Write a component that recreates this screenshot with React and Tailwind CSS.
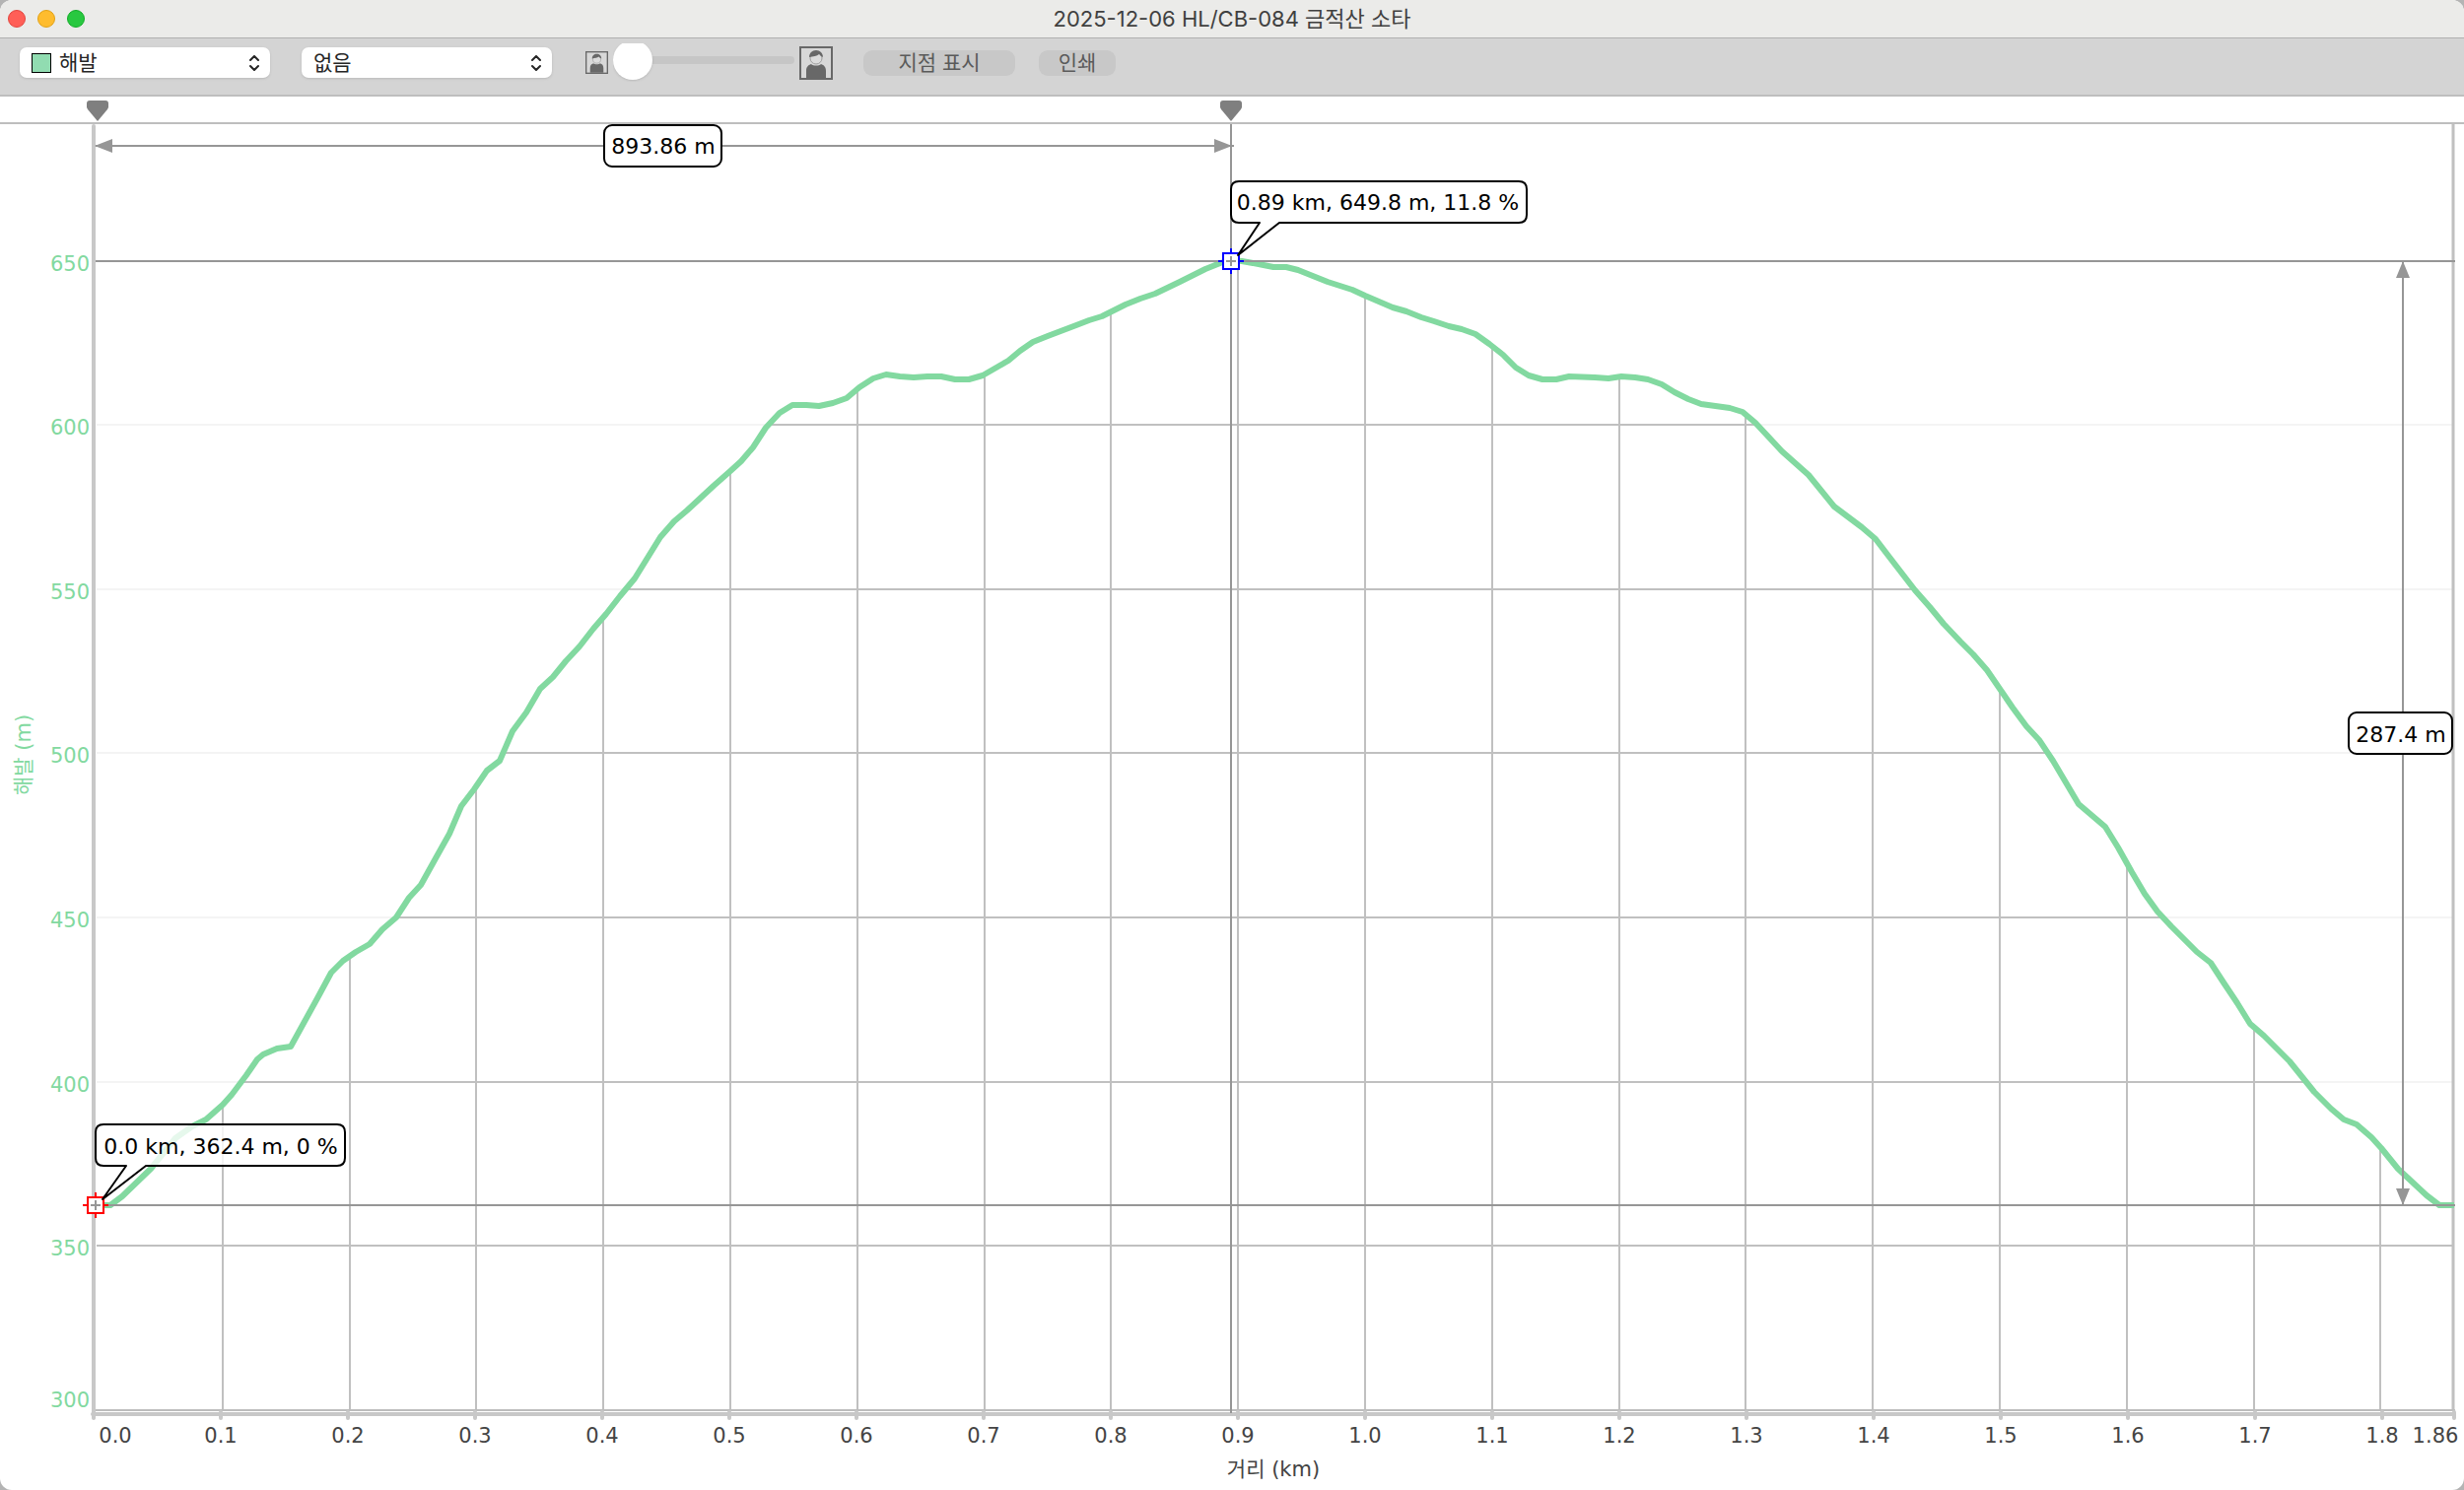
import { useState } from "react";

const X_TICKS = [
  "0.1", "0.2", "0.3", "0.4", "0.5", "0.6", "0.7", "0.8", "0.9",
  "1.0", "1.1", "1.2", "1.3", "1.4", "1.5", "1.6", "1.7", "1.8",
];

const Y_TICKS = [
  { label: "650", y: 265 },
  { label: "600", y: 431 },
  { label: "550", y: 598 },
  { label: "500", y: 764 },
  { label: "450", y: 931 },
  { label: "400", y: 1098 },
  { label: "350", y: 1264 },
];

// elevation track in chart units
const PROFILE = [
  [97, 1223], [112, 1223], [124, 1214], [153, 1186], [178, 1155], [195, 1143],
  [209, 1136], [226, 1121], [235, 1111], [250, 1091], [261, 1075], [267, 1070],
  [281, 1064], [295, 1062], [322, 1013], [336, 987], [348, 975], [361, 966],
  [375, 958], [388, 943], [402, 931], [415, 911], [427, 898], [442, 871],
  [456, 846], [468, 818], [481, 801], [494, 782], [507, 772], [520, 742],
  [534, 723], [548, 699], [561, 687], [574, 671], [588, 656], [602, 638],
  [615, 623], [629, 605], [644, 587], [657, 566], [670, 545], [684, 529],
  [697, 518], [710, 506], [724, 493], [741, 478], [752, 468], [764, 454],
  [777, 434], [791, 419], [804, 411], [818, 411], [831, 412], [845, 409],
  [859, 404], [872, 393], [886, 384], [899, 380], [913, 382], [927, 383],
  [941, 382], [955, 382], [969, 385], [983, 385], [997, 381], [1023, 366],
  [1035, 356], [1048, 347], [1063, 341], [1092, 330], [1105, 325], [1118, 321],
  [1142, 309], [1157, 303], [1172, 298], [1197, 286], [1223, 273], [1238, 267],
  [1248, 264], [1260, 265], [1277, 268], [1292, 271], [1305, 271], [1317, 274],
  [1332, 280], [1347, 286], [1372, 294], [1385, 300], [1413, 312], [1427, 316],
  [1442, 322], [1455, 326], [1470, 331], [1483, 334], [1497, 339], [1511, 349],
  [1525, 360], [1538, 373], [1551, 381], [1565, 385], [1579, 385], [1592, 382],
  [1618, 383], [1632, 384], [1645, 382], [1659, 383], [1672, 385], [1686, 390],
  [1699, 398], [1713, 405], [1726, 410], [1755, 414], [1768, 418], [1781, 429],
  [1795, 444], [1808, 458], [1835, 482], [1861, 514], [1889, 535], [1903, 547],
  [1916, 564], [1943, 599], [1958, 616], [1972, 633], [1989, 651], [2002, 664],
  [2016, 680], [2029, 699], [2042, 718], [2056, 737], [2069, 751], [2083, 772],
  [2109, 816], [2136, 839], [2149, 860], [2163, 885], [2176, 907], [2189, 925],
  [2203, 940], [2217, 954], [2229, 966], [2243, 977], [2256, 997], [2270, 1018],
  [2283, 1039], [2297, 1051], [2323, 1077], [2348, 1108], [2365, 1125],
  [2378, 1136], [2391, 1141], [2406, 1154], [2416, 1165], [2433, 1186],
  [2447, 1199], [2462, 1213], [2475, 1223], [2490, 1223],
];

const linePoints = PROFILE.map((p) => p.join(",")).join(" ");
const areaPoints = `97,1430 ${linePoints} 2490,1430`;

const PersonIcon = ({ className }) => (
  <svg viewBox="0 0 34 34" className={className} aria-hidden="true">
    <rect x="1" y="1" width="32" height="32" fill="#d8d8d8" stroke="#686868" strokeWidth="2" />
    <path d="M7 32V25c0-4 2-6 5-7 2 2 8 2 10 0 3 1 5 3 5 7v7z" fill="#686868" />
    <circle cx="17" cy="12" r="6" fill="#dcdcdc" stroke="#a0a0a0" strokeWidth="1" />
    <path
      d="M10 11c0-4 3-7 7-7s7 3 7 7l-2-1c-1-1-1-1-2-2-2 2-6 2-10 3z"
      fill="#686868"
    />
  </svg>
);

const Picker = ({ label, value, swatch }) => (
  <div className="relative flex h-[31px] w-[254px] items-center rounded-[7px] bg-white shadow-sm">
    {swatch && (
      <span className="pointer-events-none absolute left-3 h-5 w-5 border border-black bg-[#91dcb1]" />
    )}
    <select
      aria-label={label}
      className={
        swatch
          ? "h-full w-full appearance-none rounded-[7px] bg-transparent pl-10 text-[21px] leading-7 text-[#262626]"
          : "h-full w-full appearance-none rounded-[7px] bg-transparent pl-3 text-[21px] leading-7 text-[#262626]"
      }
    >
      <option>{value}</option>
    </select>
    <svg
      viewBox="0 0 10 16"
      className="pointer-events-none absolute right-[11px] h-4 w-[10px]"
      fill="none"
      stroke="#262626"
      strokeWidth="2"
      strokeLinecap="round"
      strokeLinejoin="round"
    >
      <path d="M1 5 5 1 9 5M1 11 5 15 9 11" />
    </svg>
  </div>
);

const TrackNode = ({ x, y, color }) => (
  <g strokeWidth="2">
    <path d={`M${x - 13} ${y}h26M${x} ${y - 13}v26`} stroke={color} />
    <rect x={x - 8} y={y - 8} width="16" height="16" fill="#fff" stroke={color} />
    <path d={`M${x - 5} ${y}h10M${x} ${y - 5}v10`} stroke="#969696" />
  </g>
);

const RulerPin = ({ x }) => (
  <path
    d={`M${x - 11} 105q0-3 3-3h16q3 0 3 3v4l-1 2L${x} 123l-10-12-1-2z`}
    fill="#7f7f7f"
  />
);

const Chart = () => (
  <svg
    viewBox="0 98 2500 1414"
    className="block h-auto w-full font-['DejaVu_Sans','Noto_Sans_CJK_KR',sans-serif]"
    role="img"
    aria-label="해발 (m) / 거리 (km)"
  >
    <defs>
      <clipPath id="under-track">
        <polygon points={areaPoints} />
      </clipPath>
    </defs>

    {/* Ruler */}
    <path d="M0 125H2500" stroke="#bebebe" strokeWidth="2" />
    <RulerPin x={99} />
    <RulerPin x={1249} />

    {/* Grid */}
    <g strokeWidth="2">
      {Y_TICKS.slice(1).map((t) => (
        <path key={t.label} d={`M98 ${t.y}H2488`} stroke="#f4f4f4" />
      ))}
      <g clipPath="url(#under-track)" stroke="#c0c0c0">
        {Y_TICKS.slice(1).map((t) => (
          <path key={t.label} d={`M98 ${t.y}H2488`} />
        ))}
        {X_TICKS.map((t) => (
          <path key={t} d={`M${Math.round(97 + t * 1288)} 200V1430`} />
        ))}
      </g>
    </g>

    {/* Axes */}
    <path d="M2489 126V1430" stroke="#c0c0c0" strokeWidth="3" />
    <path d="M97 1431H2491" stroke="#bdbdbd" strokeWidth="2" />
    <g stroke="#c8c8c8" strokeWidth="4" strokeLinecap="round">
      <path d="M95 128V1438" />
      <path d="M94 1435H2490" />
      <path d="M95 1433V1439M2490 1433V1439" />
      {X_TICKS.map((t) => (
        <path key={t} d={`M${Math.round(95 + t * 1290)} 1433V1439`} />
      ))}
    </g>

    {/* Track */}
    <polyline
      points={linePoints}
      fill="none"
      stroke="#82d9a0"
      strokeWidth="6"
      strokeLinejoin="round"
    />

    {/* Measure lines */}
    <g stroke="#969696" strokeWidth="2">
      <path d="M97 265H2491M97 1223H2491M1249 126V1434" />
      <path d="M97 148H613M733 148H1252" />
      <path d="M2438 266V723M2438 765V1222" />
    </g>
    <g fill="#969696">
      <path d="M96 148l18-7v14zM1250 148l-18-7v14z" />
      <path d="M2438 265l-7 17h14zM2438 1223l-7-17h14z" />
    </g>

    <TrackNode x={97} y={1223} color="#ff0000" />
    <TrackNode x={1249} y={265} color="#0000ff" />

    {/* Callouts */}
    <g fill="#fff" fillOpacity="0.8" stroke="#000" strokeWidth="2" strokeLinejoin="round">
      <rect x="613" y="127" width="119" height="42" rx="8" />
      <rect x="2383" y="723" width="105" height="42" rx="8" />
      <path d="M1257 184H1541q8 0 8 8V218q0 8-8 8H1298L1256 259 1278 226H1257q-8 0-8-8V192q0-8 8-8z" />
      <path d="M105 1141H342q8 0 8 8V1175q0 8-8 8H148L104 1217 128 1183H105q-8 0-8-8V1149q0-8 8-8z" />
    </g>
    <g fontSize="22" textAnchor="middle" fill="#000">
      <text x="673" y="156">893.86 m</text>
      <text x="1398" y="213">0.89 km, 649.8 m, 11.8 %</text>
      <text x="224" y="1171">0.0 km, 362.4 m, 0 %</text>
      <text x="2436" y="753">287.4 m</text>
    </g>

    {/* Axis labels */}
    <g fontSize="21" textAnchor="end" fill="#82d9a0">
      {Y_TICKS.map((t) => (
        <text key={t.label} x="91" y={t.y + 10}>
          {t.label}
        </text>
      ))}
      <text x="91" y="1428">300</text>
    </g>
    <g fontSize="21" textAnchor="middle" fill="#444">
      <text x="117" y="1464">0.0</text>
      {X_TICKS.map((t) => (
        <text key={t} x={Math.round(95 + t * 1290)} y="1464">
          {t}
        </text>
      ))}
      <text x="2471" y="1464">1.86</text>
      <text x="1292" y="1498">거리 (km)</text>
    </g>
    <text
      fontSize="21"
      textAnchor="middle"
      fill="#82d9a0"
      transform="translate(31 766) rotate(-90)"
    >
      해발 (m)
    </text>
  </svg>
);

const App = () => {
  const [size, setSize] = useState(0);

  return (
    <div className="min-h-screen bg-[#b4b4b4]">
      <div className="min-h-screen overflow-hidden rounded-xl bg-white font-['Inter','Noto_Sans_CJK_KR',sans-serif]">
        {/* Title bar */}
        <header className="grid h-[39px] grid-cols-[1fr_auto_1fr] items-center border-b border-[#b0b0b0] bg-[#ebebe9] px-2">
          <div className="flex gap-3">
            <button aria-label="닫기" className="h-[18px] w-[18px] rounded-full border border-[#e2463f] bg-[#ff5f57]" />
            <button aria-label="최소화" className="h-[18px] w-[18px] rounded-full border border-[#e1a116] bg-[#febc2e]" />
            <button aria-label="확대" className="h-[18px] w-[18px] rounded-full border border-[#12ac28] bg-[#28c840]" />
          </div>
          <h1 className="text-[22px] leading-7 text-[#404040]">
            2025-12-06 HL/CB-084 금적산 소타
          </h1>
        </header>

        {/* Toolbar */}
        <div className="flex h-[59px] items-center border-b-2 border-[#bebebe] bg-[#d4d4d4] pb-2 pl-5">
          <div className="flex gap-8">
            <Picker label="왼쪽 축" value="해발" swatch />
            <Picker label="오른쪽 축" value="없음" />
          </div>
          <div className="ml-[34px] flex items-center gap-[5px]">
            <PersonIcon className="h-[23px] w-[23px]" />
            <div className="flex h-[39px] items-end overflow-hidden pb-[2px]">
              <input
                type="range"
                aria-label="확대 비율"
                min="0"
                max="100"
                value={size}
                onChange={(e) => setSize(e.target.value)}
                className="h-10 w-[184px] shrink-0 appearance-none bg-transparent [&::-webkit-slider-runnable-track]:h-2 [&::-webkit-slider-runnable-track]:rounded-full [&::-webkit-slider-runnable-track]:bg-[#c6c6c6] [&::-webkit-slider-thumb]:-mt-4 [&::-webkit-slider-thumb]:h-10 [&::-webkit-slider-thumb]:w-10 [&::-webkit-slider-thumb]:appearance-none [&::-webkit-slider-thumb]:rounded-full [&::-webkit-slider-thumb]:bg-white [&::-webkit-slider-thumb]:shadow"
              />
            </div>
            <PersonIcon className="h-[34px] w-[34px]" />
          </div>
          <div className="ml-[31px] flex gap-6">
            <button className="h-[26px] w-[154px] rounded-[9px] bg-[#c8c8c8] text-[21px] leading-[26px] text-[#5a5a5a]">
              지점 표시
            </button>
            <button className="h-[26px] w-[78px] rounded-[9px] bg-[#c8c8c8] text-[21px] leading-[26px] text-[#5a5a5a]">
              인쇄
            </button>
          </div>
        </div>

        <Chart />
      </div>
    </div>
  );
};

export default App;
